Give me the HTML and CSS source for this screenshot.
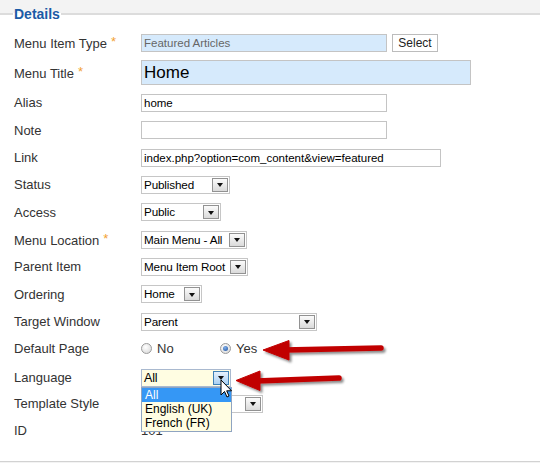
FILE: index.html
```html
<!DOCTYPE html>
<html>
<head>
<meta charset="utf-8">
<title>Details</title>
<link rel="stylesheet" href="styles.css">
</head>
<body>
<fieldset class="details">
  <legend>Details</legend>

  <div class="row r1">
    <label class="lbl">Menu Item Type<span class="req">*</span></label>
    <div class="ctl">
      <input class="inp w-md blue muted" value="Featured Articles" readonly>
      <button class="btn">Select</button>
    </div>
  </div>

  <div class="row r2">
    <label class="lbl">Menu Title<span class="req">*</span></label>
    <div class="ctl"><input class="inp w-title blue big" value="Home" readonly></div>
  </div>

  <div class="row">
    <label class="lbl">Alias</label>
    <div class="ctl"><input class="inp w-md" value="home" readonly></div>
  </div>

  <div class="row">
    <label class="lbl">Note</label>
    <div class="ctl"><input class="inp w-md" value="" readonly></div>
  </div>

  <div class="row">
    <label class="lbl">Link</label>
    <div class="ctl"><input class="inp w-lg" value="index.php?option=com_content&amp;view=featured" readonly></div>
  </div>

  <div class="row">
    <label class="lbl">Status</label>
    <div class="ctl"><div class="sel s-status"><span class="v">Published</span><span class="b"></span></div></div>
  </div>

  <div class="row">
    <label class="lbl">Access</label>
    <div class="ctl"><div class="sel s-access"><span class="v">Public</span><span class="b"></span></div></div>
  </div>

  <div class="row">
    <label class="lbl">Menu Location<span class="req">*</span></label>
    <div class="ctl"><div class="sel s-mloc"><span class="v">Main Menu - All</span><span class="b"></span></div></div>
  </div>

  <div class="row">
    <label class="lbl">Parent Item</label>
    <div class="ctl"><div class="sel s-parent"><span class="v">Menu Item Root</span><span class="b"></span></div></div>
  </div>

  <div class="row">
    <label class="lbl">Ordering</label>
    <div class="ctl"><div class="sel s-order"><span class="v">Home</span><span class="b"></span></div></div>
  </div>

  <div class="row">
    <label class="lbl">Target Window</label>
    <div class="ctl"><div class="sel s-target"><span class="v">Parent</span><span class="b"></span></div></div>
  </div>

  <div class="row">
    <label class="lbl">Default Page</label>
    <div class="ctl radios">
      <span class="opt opt-no"><span class="radio"></span>No</span>
      <span class="opt"><span class="radio on"></span>Yes</span>
    </div>
  </div>

  <div class="row r-lang">
    <label class="lbl">Language</label>
    <div class="ctl">
      <div class="sel s-lang lang">
        <span class="v">All</span><span class="b hot"></span>
        <ul class="list">
          <li class="item active">All</li>
          <li class="item">English (UK)</li>
          <li class="item">French (FR)</li>
        </ul>
      </div>
    </div>
  </div>

  <div class="row r-tpl">
    <label class="lbl">Template Style</label>
    <div class="ctl"><div class="sel s-tpl"><span class="v"></span><span class="b"></span></div></div>
  </div>

  <div class="row">
    <label class="lbl">ID</label>
    <div class="ctl"><span class="val">101</span></div>
  </div>
</fieldset>

<svg class="overlay" width="540" height="463" viewBox="0 0 540 463" aria-hidden="true">
  <defs>
    <filter id="sh" x="-10%" y="-50%" width="130%" height="220%">
      <feDropShadow dx="2" dy="2.2" stdDeviation="1.2" flood-color="#000" flood-opacity="0.45"/>
    </filter>
  </defs>
  <g filter="url(#sh)" fill="#c10000" stroke="#c10000">
    <line x1="284" y1="350" x2="381" y2="348" stroke-width="5.5" stroke-linecap="round"/>
    <polygon points="263,350 289,340.5 289,360" stroke-width="1" stroke-linejoin="round"/>
    <line x1="256" y1="381" x2="339" y2="378" stroke-width="5.5" stroke-linecap="round"/>
    <polygon points="236,380.5 260,371 260,390.5" stroke-width="1" stroke-linejoin="round"/>
  </g>
  <path d="M221 380 V395 L224.5 391.5 L227 397 L229 396 L226.7 390.8 H231.5 Z" fill="#fff" stroke="#000" stroke-width="1" stroke-linejoin="round"/>
</svg>
</body>
</html>
```

FILE: styles.css
```css
html, body {
  margin: 0;
  padding: 0;
  overflow: hidden;
}

body {
  position: relative;
  width: 540px;
  height: 463px;
  background: #f3f3f3;
  font-family: "Liberation Sans", Arial, sans-serif;
  color: #333;
}

.details {
  margin: 5px -20px 0 -20px;
  padding: 6.33px 0 16.33px 34px;
  border: 0;
  border-top: 2px solid #dcdcdc;
  border-bottom: 1px solid #d2d2d2;
  background: #fff;
  min-width: 0;
}

.details legend {
  padding: 0 1px;
  margin-left: -1px;
  font-size: 14px;
  font-weight: bold;
  line-height: 18px;
  color: #1b5aa6;
}

.row {
  display: flex;
  align-items: center;
  height: 27.33px;
}

.r2 {
  height: 32.67px;
}

.r-lang {
  margin-top: 1.5px;
}

.r-tpl {
  margin-top: -1.5px;
}

.lbl {
  flex-shrink: 0;
  width: 127px;
  font-size: 13px;
  color: #333;
}

.req {
  margin-left: 4px;
  font-size: 13px;
  color: #f2a131;
  vertical-align: 2px;
}

.ctl {
  display: flex;
  align-items: center;
}

.inp {
  box-sizing: border-box;
  height: 18px;
  margin: 0;
  padding: 0 2px;
  border: 1px solid #c4c4c4;
  background: #fff;
  font-family: "Liberation Sans", Arial, sans-serif;
  font-size: 11.5px;
  color: #000;
  outline: none;
}

.w-md { width: 246px; }
.w-lg { width: 300px; }

.w-title {
  width: 330px;
  height: 25px;
}

.blue { background: #d6eafc; }
.muted { color: #666; }
.big { font-size: 17px; }

.btn {
  box-sizing: border-box;
  width: 46px;
  height: 18px;
  margin: 0 0 0 5px;
  padding: 0;
  border: 1px solid #bcbcbc;
  background: #fff;
  font-family: "Liberation Sans", Arial, sans-serif;
  font-size: 12px;
  color: #222;
}

.sel {
  position: relative;
  display: flex;
  box-sizing: border-box;
  height: 18px;
  border: 1px solid #c6c6c6;
  background: #fff;
}

.sel .v {
  flex: 1;
  padding-left: 2px;
  font-size: 11.7px;
  line-height: 16px;
  letter-spacing: -0.15px;
  color: #000;
  white-space: nowrap;
  overflow: hidden;
}

.sel .b {
  box-sizing: border-box;
  flex-shrink: 0;
  display: flex;
  align-items: center;
  justify-content: center;
  width: 16px;
  margin: 1px 1px 1px 0;
  border: 1px solid #929292;
  background: linear-gradient(#fbfbfb, #dadada);
}

.sel .b::after {
  content: "";
  margin-top: 1px;
  border-left: 3.5px solid transparent;
  border-right: 3.5px solid transparent;
  border-top: 4px solid #111;
}

.s-status { width: 89px; }
.s-access { width: 80px; }
.s-mloc { width: 106px; }
.s-parent { width: 107px; }
.s-order { width: 61px; }
.s-target { width: 176px; }
.s-lang { width: 90px; }
.s-tpl { width: 122px; }

.lang {
  background: #fffde2;
  border-color: #a9b9cf;
}

.lang .v {
  font-size: 12.5px;
}

.lang .b.hot {
  border-color: #3f80b5;
  background: linear-gradient(#e6f1fc, #a9d0f3);
}

.list {
  position: absolute;
  left: -1px;
  top: 17px;
  z-index: 2;
  box-sizing: border-box;
  width: 91px;
  margin: 0;
  padding: 0;
  list-style: none;
  border: 1px solid #8fa4c1;
  background: #fffde2;
}

.item {
  height: 14.33px;
  padding-left: 3px;
  font-size: 12px;
  line-height: 14.33px;
  color: #000;
  white-space: nowrap;
}

.item.active {
  background: #3597f5;
  color: #fff;
}

.radios {
  font-size: 13px;
  color: #333;
}

.opt {
  display: flex;
  align-items: center;
  gap: 5px;
}

.opt-no {
  width: 79px;
}

.radio {
  position: relative;
  box-sizing: border-box;
  width: 11px;
  height: 11px;
  border: 1px solid #9a9a9a;
  border-radius: 50%;
  background: radial-gradient(circle at 40% 35%, #ffffff, #d4d4d4);
}

.radio.on::after {
  content: "";
  position: absolute;
  left: 2px;
  top: 2px;
  width: 5px;
  height: 5px;
  border-radius: 50%;
  background: radial-gradient(circle at 40% 35%, #7fb0ec, #1f4f9a);
}

.val {
  font-size: 13px;
  color: #333;
}

.overlay {
  position: absolute;
  left: 0;
  top: 0;
  z-index: 5;
  pointer-events: none;
}
```
